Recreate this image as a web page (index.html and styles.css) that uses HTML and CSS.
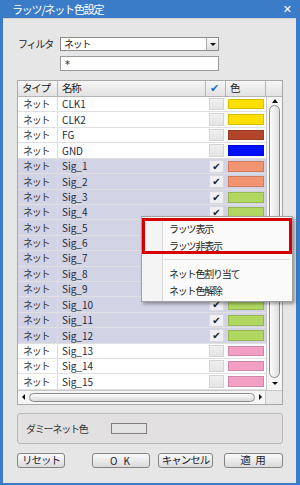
FILE: index.html
```html
<!DOCTYPE html>
<html lang="ja">
<head>
  <meta charset="UTF-8">
  <title>ラッツ/ネット色設定</title>
  <link rel="stylesheet" href="styles.css">
</head>
<body>
  <div class="window">
    <div class="titlebar">
      <span class="title">ラッツ/ネット色設定</span>
      <span class="close">✕</span>
    </div>

    <div class="panel">
      <div class="filter">
        <span class="label">フィルタ</span>
        <div class="combo">
          <span class="value">ネット</span>
          <span class="drop"><i class="tri-down"></i></span>
        </div>
      </div>

      <div class="pattern">*</div>

      <div class="table">
        <div class="thead">
          <span>タイプ</span>
          <span>名称</span>
          <span class="hchk">✔</span>
          <span>色</span>
          <span></span>
        </div>

        <div class="tbody">
          <div class="rows">
            <div class="row"><span class="type">ネット</span><span class="name">CLK1</span><span class="chk"></span><span class="color"><i class="sw yellow"></i></span></div>
            <div class="row"><span class="type">ネット</span><span class="name">CLK2</span><span class="chk"></span><span class="color"><i class="sw yellow"></i></span></div>
            <div class="row"><span class="type">ネット</span><span class="name">FG</span><span class="chk"></span><span class="color"><i class="sw rust"></i></span></div>
            <div class="row"><span class="type">ネット</span><span class="name">GND</span><span class="chk"></span><span class="color"><i class="sw blue"></i></span></div>
            <div class="row sel"><span class="type">ネット</span><span class="name">Sig_1</span><span class="chk">✔</span><span class="color"><i class="sw salmon"></i></span></div>
            <div class="row sel"><span class="type">ネット</span><span class="name">Sig_2</span><span class="chk">✔</span><span class="color"><i class="sw salmon"></i></span></div>
            <div class="row sel"><span class="type">ネット</span><span class="name">Sig_3</span><span class="chk">✔</span><span class="color"><i class="sw green"></i></span></div>
            <div class="row sel"><span class="type">ネット</span><span class="name">Sig_4</span><span class="chk">✔</span><span class="color"><i class="sw green"></i></span></div>
            <!-- rows under the context menu: check marks hidden by it -->
            <div class="row sel"><span class="type">ネット</span><span class="name">Sig_5</span><span class="chk"></span><span class="color"><i class="sw green"></i></span></div>
            <div class="row sel"><span class="type">ネット</span><span class="name">Sig_6</span><span class="chk"></span><span class="color"><i class="sw green"></i></span></div>
            <div class="row sel"><span class="type">ネット</span><span class="name">Sig_7</span><span class="chk"></span><span class="color"><i class="sw green"></i></span></div>
            <div class="row sel"><span class="type">ネット</span><span class="name">Sig_8</span><span class="chk"></span><span class="color"><i class="sw green"></i></span></div>
            <div class="row sel"><span class="type">ネット</span><span class="name">Sig_9</span><span class="chk"></span><span class="color"><i class="sw green"></i></span></div>
            <div class="row sel"><span class="type">ネット</span><span class="name">Sig_10</span><span class="chk">✔</span><span class="color"><i class="sw green"></i></span></div>
            <div class="row sel"><span class="type">ネット</span><span class="name">Sig_11</span><span class="chk">✔</span><span class="color"><i class="sw green"></i></span></div>
            <div class="row sel"><span class="type">ネット</span><span class="name">Sig_12</span><span class="chk">✔</span><span class="color"><i class="sw green"></i></span></div>
            <div class="row"><span class="type">ネット</span><span class="name">Sig_13</span><span class="chk"></span><span class="color"><i class="sw pink"></i></span></div>
            <div class="row"><span class="type">ネット</span><span class="name">Sig_14</span><span class="chk"></span><span class="color"><i class="sw pink"></i></span></div>
            <div class="row"><span class="type">ネット</span><span class="name">Sig_15</span><span class="chk"></span><span class="color"><i class="sw pink"></i></span></div>
          </div>
          <div class="vscroll">
            <span class="arrow up"><i class="tri-up"></i></span>
            <span class="vthumb"></span>
            <span class="arrow down"><i class="tri-down"></i></span>
          </div>
        </div>

        <div class="hscroll">
          <div class="htrack">
            <i class="tri-left"></i>
            <span class="hthumb"></span>
            <i class="tri-right"></i>
          </div>
          <div class="corner"></div>
        </div>
      </div>

      <div class="group">
        <span class="glabel">ダミーネット色</span>
        <span class="dummy"></span>
      </div>

      <div class="buttons">
        <button class="reset">リセット</button>
        <button class="ok">O K</button>
        <button class="cancel">キャンセル</button>
        <button class="apply">適 用</button>
      </div>
    </div>

    <div class="menu">
      <div class="item">ラッツ表示</div>
      <div class="item">ラッツ非表示</div>
      <div class="sep"></div>
      <div class="item">ネット色割り当て</div>
      <div class="item">ネット色解除</div>
      <div class="mark"></div>
    </div>
  </div>
</body>
</html>
```

FILE: styles.css
```css
body {margin: 0; font: 10px/1 "Noto Sans CJK JP", sans-serif; color: #222; letter-spacing: -1.2px;}

.window {position: relative; width: 300px; height: 485px; box-sizing: border-box; padding: 0 4px 2px 3px; background: #3b7cc8;}
.titlebar {height: 18px; display: flex; align-items: center; justify-content: space-between; padding: 0 4px 0 9px; color: #fff;}
.title {font-size: 11px;}
.close {font: bold 11px "DejaVu Sans", sans-serif; letter-spacing: 0;}

.panel {height: 465px; box-sizing: border-box; padding: 18px 13px 0 14px; background: #e6e6e6; border-top: 1px solid #d0d0d0;}

.filter {display: flex; align-items: center; height: 14px;}
.label {width: 42px; margin-left: 1px;}
.combo {width: 159px; height: 14px; box-sizing: border-box; display: flex; align-items: center; justify-content: space-between; border: 1px solid #8c8c8c; background: #fff;}
.value {padding-left: 3px;}
.drop {width: 11px; height: 12px; display: flex; align-items: center; justify-content: center; border-left: 1px solid #aaa; background: linear-gradient(#fafafa, #dedede);}
.pattern {width: 159px; height: 15px; box-sizing: border-box; margin: 5px 0 0 43px; padding: 3px 0 0 4px; border: 1px solid #9a9a9a; background: #fff; font-family: "DejaVu Sans", sans-serif;}

.tri-down {display: block; border: 3px solid transparent; border-top: 3px solid #111; border-bottom: 0;}
.tri-up {display: block; border: 3px solid transparent; border-bottom: 4px solid #111; border-top: 0;}
.tri-left {display: block; border: 3px solid transparent; border-right: 3px solid #111; border-left: 0;}
.tri-right {display: block; border: 3px solid transparent; border-left: 3px solid #111; border-right: 0;}

.table {margin-top: 9px; height: 325px; box-sizing: border-box; border: 1px solid #a8a8a8; background: #fff; display: flex; flex-direction: column;}
.thead {height: 16px; display: grid; grid-template-columns: 40px 148px 20px 40px 16px; background: linear-gradient(#f6f6f6, #e2e2e2); border-bottom: 1px solid #b4b4b4;}
.thead span {display: flex; align-items: center; padding-left: 4px; border-right: 1px solid #b4b4b4; font-size: 10.5px;}
.thead span:last-child {border-right: 0;}
.thead .hchk {padding-left: 4px; color: #2a6fd0; font: 11px "DejaVu Sans", sans-serif;}

.tbody {display: flex; height: 293px;}
.rows {flex: 1;}
.row {height: 15.42px; box-sizing: border-box; display: grid; grid-template-columns: 40px 148px 20px 40px; border-bottom: 1px solid #e0e0e0;}
.row span {display: flex; align-items: center;}
.type {padding-left: 5px; border-right: 1px solid #dcdcdc; color: #333;}
.name {padding-left: 4px; letter-spacing: 0; color: #1c2a3c;}
.chk {justify-content: center; margin: 1px 2px 1px 3px; background: linear-gradient(#f0f0f0, #e4e4e4); border: 1px solid #d4d4d4; font: 10px "DejaVu Sans", sans-serif; color: #222; letter-spacing: 0;}
.color {padding: 2px;}
.sw {display: block; width: 100%; height: 100%; box-sizing: border-box; border: 1px solid rgba(0, 0, 0, 0.15);}
.sel {background: #d3d3e6;}
.sel .chk {background: #f0f0f4; border-color: #d8d8e0;}

.yellow {background: #ffde00;}
.rust {background: #b3462a;}
.blue {background: #0010ff;}
.salmon {background: #f2946f;}
.green {background: #b1d761;}
.pink {background: #f29fc3;}

.vscroll {width: 16px; box-sizing: border-box; display: flex; flex-direction: column; align-items: center; border-left: 1px solid #c8c8c8; background: #f6f6f6;}
.arrow {display: flex; align-items: center; justify-content: center;}
.up {height: 8px;}
.down {height: 12px;}
.vthumb {flex: 1; width: 11px; box-sizing: border-box; border: 1px solid #8a8a8a; border-radius: 6px; background: linear-gradient(90deg, #fdfdfd, #dedede);}

.hscroll {height: 14px; display: flex; border-top: 1px solid #c8c8c8;}
.htrack {flex: 1; display: flex; align-items: center; padding: 0 3px 0 4px; gap: 4px; background: #f6f6f6;}
.hthumb {flex: 1; height: 9px; box-sizing: border-box; border: 1px solid #8a8a8a; border-radius: 5px; background: linear-gradient(#fdfdfd, #d8d8d8);}
.corner {width: 16px; border-left: 1px solid #c8c8c8; background: #e8e8e8;}

.group {margin-top: 8px; height: 31px; box-sizing: border-box; display: flex; align-items: center; padding-left: 8px; border: 1px solid #b8b8b8; border-radius: 3px; background: #e2e0e0;}
.glabel {width: 85px; color: #333;}
.dummy {width: 36px; height: 11px; box-sizing: border-box; border: 1px solid #808080; background: #e4e4e4;}

.buttons {margin-top: 9px; display: flex;}
button {height: 15px; margin: 0; padding: 0; box-sizing: border-box; border: 1px solid #858585; border-radius: 3px; background: linear-gradient(#fbfbfb, #dadada); font: 10.5px/1 "Noto Sans CJK JP", sans-serif; color: #223; letter-spacing: -1px;}
.reset {width: 48px;}
.ok {width: 58px; margin-left: 27px; font-size: 10px; letter-spacing: 2px;}
.cancel {width: 55px; margin-left: 8px;}
.apply {width: 59px; margin-left: 11px; letter-spacing: 1px;}

.menu {position: absolute; left: 141px; top: 216px; width: 152px; height: 86px; box-sizing: border-box; padding: 3px 0 2px; border: 1px solid #a0a0a0; background: linear-gradient(90deg, #f4f4f4 20px, #d8d8d8 20px, #d8d8d8 21px, #fafafa 21px); box-shadow: 2px 2px 3px rgba(0, 0, 0, 0.35);}
.item {height: 17px; display: flex; align-items: center; padding-left: 27px; color: #222;}
.sep {height: 1px; margin: 5px 2px 5px 22px; background: #dcdcdc;}
.mark {position: absolute; left: 0; top: 1px; width: 150px; height: 36px; box-sizing: border-box; border: 3px solid #d60000;}
```
